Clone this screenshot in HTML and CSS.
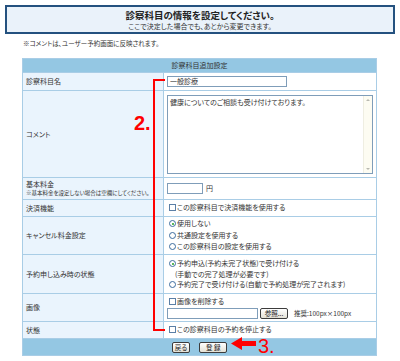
FILE: index.html
```html
<!DOCTYPE html>
<html lang="ja">
<head>
<meta charset="utf-8">
<link rel="stylesheet" href="styles.css">
</head>
<body>
<div class="page">
  <div class="banner">
    <p class="banner-title">診察科目の情報を設定してください。</p>
    <p class="banner-sub">ここで決定した場合でも、あとから変更できます。</p>
  </div>
  <p class="note">※コメントは、ユーザー予約画面に反映されます。</p>
  <table class="form">
    <colgroup><col class="c-label"><col class="c-value"></colgroup>
    <tr class="r-head"><th colspan="2">診察科目追加設定</th></tr>
    <tr class="r-name"><th>診察科目名</th><td><span class="field field-name">一般診療</span></td></tr>
    <tr class="r-comment"><th>コメント</th><td>
      <div class="textarea">
        <div class="ta-text">健康についてのご相談も受け付けております。</div>
        <div class="ta-scroll"><span class="ta-up"></span><span class="ta-down"></span></div>
      </div>
    </td></tr>
    <tr class="r-fee"><th>基本料金<span class="sub">※基本料金を設定しない場合は空欄にしてください。</span></th><td><span class="field field-fee"></span><span class="yen">円</span></td></tr>
    <tr class="r-pay"><th>決済機能</th><td><span class="opt"><span class="cb"></span>この診察科目で決済機能を使用する</span></td></tr>
    <tr class="r-cancel"><th>キャンセル料金設定</th><td>
      <span class="opt"><span class="rd on"></span>使用しない</span>
      <span class="opt"><span class="rd"></span>共通設定を使用する</span>
      <span class="opt"><span class="rd"></span>この診察科目の設定を使用する</span>
    </td></tr>
    <tr class="r-state"><th>予約申し込み時の状態</th><td>
      <span class="opt tight"><span class="rd on"></span>予約申込(予約未完了状態)で受け付ける</span>
      <span class="opt tight indent">(手動での完了処理が必要です)</span>
      <span class="opt tight"><span class="rd"></span>予約完了で受け付ける(自動で予約処理が完了されます)</span>
    </td></tr>
    <tr class="r-image"><th>画像</th><td>
      <span class="opt"><span class="cb"></span>画像を削除する</span>
      <span class="file-line"><span class="field field-file"></span><span class="btn btn-ref">参照...</span><span class="hint">推奨:100px×100px</span></span>
    </td></tr>
    <tr class="r-status"><th>状態</th><td><span class="opt"><span class="cb"></span>この診察科目の予約を停止する</span></td></tr>
    <tr class="r-foot"><td colspan="2"><span class="btn">戻る</span><span class="btn btn-reg">登 録</span></td></tr>
  </table>

  <div class="bracket"></div>
  <div class="num num2">2.</div>
  <svg class="arrow" width="26" height="15" viewBox="0 0 26 15"><polygon points="0,7.5 11,1 11,5 25,5 25,10 11,10 11,14" fill="#f00"/></svg>
  <div class="num num3">3.</div>
</div>
</body>
</html>
```
FILE: styles.css
```css
* { box-sizing: border-box; }
html, body { margin: 0; padding: 0; background: #fff; }
body {
  font-family: "Noto Sans CJK JP", "Liberation Sans", sans-serif;
  color: #333;
  font-feature-settings: "palt";
}
.page { position: relative; width: 400px; height: 361px; overflow: hidden; }

.banner {
  margin: 5px 5px 0;
  height: 29px;
  border: 2px solid #24517f;
  background: #eaf2fa;
  display: flex;
  flex-direction: column;
  align-items: center;
  justify-content: center;
  gap: 1px;
}
.banner p { margin: 0; }
.banner-title { font-size: 9.5px; line-height: 11px; font-weight: bold; color: #222; }
.banner-sub { font-size: 7px; line-height: 8px; }

.note { margin: 5px 0 0 23px; font-size: 6.5px; line-height: 8px; }

.form {
  margin: 11px 0 0 22px;
  width: 355px;
  table-layout: fixed;
  border-collapse: separate;
  border-spacing: 1px;
  background: #a9cde6;
  font-size: 7px;
  line-height: 9px;
}
.c-label { width: 140px; }
.c-value { width: 212px; }
.form th, .form td { padding: 0 3px; vertical-align: middle; }
.form th { background: #eaf4fd; font-weight: normal; text-align: left; }
.form td { background: #fff; }
.r-head th { background: #94c7e3; text-align: center; height: 13px; }
.r-name th, .r-name td { height: 17px; }
.r-comment th, .r-comment td { height: 86px; }
.r-fee th, .r-fee td { height: 21px; }
.r-pay th, .r-pay td { height: 16px; }
.r-cancel th, .r-cancel td { height: 37px; }
.r-state th, .r-state td { height: 38px; }
.r-image th, .r-image td { height: 27px; }
.r-status th, .r-status td { height: 16px; }
.r-foot td { background: #94c7e3; height: 16px; text-align: center; }

.sub { display: block; font-size: 5.5px; line-height: 8px; }

.field {
  display: inline-block;
  vertical-align: middle;
  height: 11px;
  border: 1px solid #7f9db9;
  background: #fff;
  padding-left: 2px;
  font-size: 7px;
  line-height: 9px;
}
.field-name { width: 120px; }
.field-fee { width: 36px; }
.field-file { width: 91px; }
.yen { margin-left: 3px; vertical-align: middle; }

.textarea {
  position: relative;
  width: 206px;
  height: 79px;
  border: 1px solid #7f9db9;
  background: #fff;
}
.ta-text { padding: 2px 12px 0 2px; font-size: 7px; line-height: 9px; }
.ta-scroll {
  position: absolute;
  top: 0; right: 0; bottom: 0;
  width: 9px;
  background: #fdfcf2;
  border-left: 1px solid #efeee2;
}
.ta-up, .ta-down {
  position: absolute;
  left: 2px;
  width: 0; height: 0;
  border-left: 2px solid transparent;
  border-right: 2px solid transparent;
}
.ta-up { top: 3px; border-bottom: 2px solid #b9b9b0; }
.ta-down { bottom: 3px; border-top: 2px solid #b9b9b0; }

.opt { display: block; line-height: 11.5px; white-space: nowrap; }
.opt.tight { line-height: 10.5px; }
.opt.indent { padding-left: 8px; }
.cb, .rd {
  display: inline-block;
  width: 7px;
  height: 7px;
  margin: 0 1px 0 2px;
  vertical-align: -1px;
  background: #fff;
}
.cb { border: 1px solid #5b7fa6; }
.rd { border: 1px solid #3d6c9e; border-radius: 50%; position: relative; }
.rd.on::after {
  content: "";
  position: absolute;
  left: 1.5px; top: 1.5px;
  width: 2px; height: 2px;
  border-radius: 50%;
  background: #23a023;
}

.file-line { display: flex; align-items: center; gap: 2px; margin-top: 1px; }
.hint { margin-left: 4px; font-size: 6.5px; }

.btn {
  display: inline-block;
  vertical-align: middle;
  height: 11px;
  padding: 0 2px;
  border: 1px solid #3c3c3c;
  border-radius: 2px;
  background: linear-gradient(#ffffff, #e4e1d6);
  font-size: 6.5px;
  line-height: 9px;
  color: #222;
}
.btn-ref { width: 28px; text-align: center; }
.btn-reg { width: 28px; text-align: center; margin-left: 9px; }

.bracket {
  position: absolute;
  left: 153px; top: 79px;
  width: 12px; height: 252px;
  border: 2px solid #f00;
  border-right: 0;
}
.num {
  position: absolute;
  font-family: "Liberation Sans", Arial, sans-serif;
  font-size: 20px;
  line-height: 20px;
  color: #f00;
  font-feature-settings: normal;
}
.num2 { left: 134px; top: 113px; font-weight: bold; }
.num3 { left: 258px; top: 336px; }
.arrow { position: absolute; left: 231px; top: 336px; }
```
